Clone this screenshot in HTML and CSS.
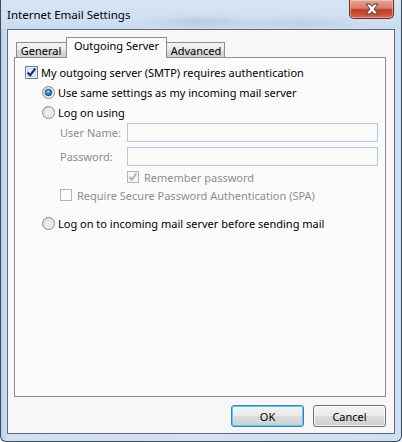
FILE: index.html
```html
<!DOCTYPE html>
<html>
<head>
<meta charset="utf-8">
<link rel="stylesheet" href="styles.css">
</head>
<body>
<div class="window">
  <div class="titlebar">
    <span class="title">Internet Email Settings</span>
    <div class="close-btn">
      <svg width="20" height="12" viewBox="0 0 20 12">
        <path d="M4 1 L8 1 L10 3.5 L12 1 L16 1 L12 6 L16 11 L12 11 L10 8.5 L8 11 L4 11 L8 6 Z" fill="#fff" stroke="#3b3b3b" stroke-width="1" stroke-linejoin="round"/>
      </svg>
    </div>
  </div>
  <div class="client">
    <div class="tabs">
      <div class="tab t-general">General</div>
      <div class="tab active">Outgoing Server</div>
      <div class="tab t-adv">Advanced</div>
    </div>
    <div class="pane">
      <div class="row r-auth">
        <span class="cb checked">
          <svg width="13" height="13" viewBox="0 0 13 13"><rect x="0.5" y="0.5" width="12" height="12" fill="#f4f4f4" stroke="#5d80a8"/><rect x="2.5" y="2.5" width="8" height="8" fill="#e6eef7" stroke="#c7d5e6"/><path d="M2.6 6.4 L5.2 9.2 L10.4 2.4" fill="none" stroke="#1d3372" stroke-width="2.2"/></svg>
        </span>
        <span class="lbl">My outgoing server (SMTP) requires authentication</span>
      </div>
      <div class="row r-radio">
        <span class="rb"><svg width="13" height="13" viewBox="0 0 13 13"><defs><radialGradient id="dot" cx="0.45" cy="0.4" r="0.6"><stop offset="0" stop-color="#8fdcff"/><stop offset="0.6" stop-color="#1f7fbf"/><stop offset="1" stop-color="#10507f"/></radialGradient><linearGradient id="rg" x1="0" y1="0" x2="1" y2="1"><stop offset="0" stop-color="#d5d5d5"/><stop offset="1" stop-color="#fbfbfb"/></linearGradient></defs><circle cx="6.5" cy="6.5" r="6" fill="url(#rg)" stroke="#8a8a8a"/><circle cx="6.5" cy="6.5" r="3.4" fill="url(#dot)" stroke="#1b4f7a" stroke-width="0.6"/></svg></span>
        <span class="lbl">Use same settings as my incoming mail server</span>
      </div>
      <div class="row r-radio">
        <span class="rb"><svg width="13" height="13" viewBox="0 0 13 13"><circle cx="6.5" cy="6.5" r="6" fill="url(#rg)" stroke="#8a8a8a"/><circle cx="6.5" cy="6.5" r="4" fill="#ececec" stroke="#dcdcdc" stroke-width="0.6"/></svg></span>
        <span class="lbl">Log on using</span>
      </div>
      <div class="field-row f-user">
        <span class="flabel">User Name:</span>
        <span class="input"></span>
      </div>
      <div class="field-row f-pass">
        <span class="flabel">Password:</span>
        <span class="input"></span>
      </div>
      <div class="row r-remember">
        <span class="cb">
          <svg width="12" height="12" viewBox="0 0 12 12"><rect x="0.5" y="0.5" width="11" height="11" fill="#f6f6f6" stroke="#b4b4b4"/><path d="M2.5 6 L4.8 8.6 L9.5 2.4" fill="none" stroke="#b3b3b3" stroke-width="2"/></svg>
        </span>
        <span class="lbl dis">Remember password</span>
      </div>
      <div class="row r-spa">
        <span class="cb">
          <svg width="12" height="12" viewBox="0 0 12 12"><rect x="0.5" y="0.5" width="11" height="11" fill="#fbfbfb" stroke="#b4b4b4"/></svg>
        </span>
        <span class="lbl dis">Require Secure Password Authentication (SPA)</span>
      </div>
      <div class="row r-radio r-last">
        <span class="rb"><svg width="13" height="13" viewBox="0 0 13 13"><circle cx="6.5" cy="6.5" r="6" fill="url(#rg)" stroke="#8a8a8a"/><circle cx="6.5" cy="6.5" r="4" fill="#ececec" stroke="#dcdcdc" stroke-width="0.6"/></svg></span>
        <span class="lbl">Log on to incoming mail server before sending mail</span>
      </div>
    </div>
    <div class="buttons">
      <div class="btn default">OK</div>
      <div class="btn">Cancel</div>
    </div>
  </div>
</div>
</body>
</html>
```
FILE: styles.css
```css
html, body {
  margin: 0;
  padding: 0;
  background: #ffffff;
}
body {
  font-family: "Segoe UI", "Noto Sans", "Liberation Sans", sans-serif;
  font-size: 11px;
  color: #000;
}
.window {
  width: 402px;
  height: 442px;
  box-sizing: border-box;
  border: 1px solid #3d4a5a;
  border-top: none;
  border-radius: 0 0 6px 6px;
  background: linear-gradient(90deg, #b7cde4 0px, #cfe0f1 6px, #d3e3f3 50%, #cde0f2 100%);
  display: flex;
  flex-direction: column;
}
.titlebar {
  height: 29px;
  display: flex;
  justify-content: space-between;
  align-items: flex-start;
  padding: 0 7px 0 6px;
  background:
    radial-gradient(ellipse 60px 8px at 200px 22px, rgba(170,190,215,0.6), rgba(170,190,215,0)),
    radial-gradient(ellipse 70px 8px at 300px 23px, rgba(175,195,218,0.5), rgba(175,195,218,0)),
    linear-gradient(180deg, #d6e5f4, #cadcef);
}
.title {
  margin-top: 7px;
  color: #000;
  font-size: 11.5px;
}
.close-btn {
  width: 45px;
  height: 19px;
  box-sizing: border-box;
  border: 1px solid #6b2a22;
  border-top: none;
  border-radius: 0 0 5px 5px;
  background: linear-gradient(180deg, #e8a595 0%, #d77c6b 45%, #c33b26 55%, #d4644c 100%);
  display: flex;
  align-items: center;
  justify-content: center;
  box-shadow: inset 0 0 0 1px rgba(255,220,210,0.5);
}
.client {
  margin: 0 6px 7px 6px;
  flex: 1;
  border: 1px solid #5c6a7c;
  background: #f7f7f7;
  padding: 7px 8px 6px 6px;
  display: flex;
  flex-direction: column;
}
.tabs {
  display: flex;
  align-items: flex-end;
  padding-left: 2px;
  height: 20px;
  position: relative;
  z-index: 1;
}
.tab {
  height: 15px;
  box-sizing: border-box;
  border: 1px solid #8c8e94;
  border-bottom: none;
  background: linear-gradient(180deg, #f3f3f3 0%, #ebebeb 50%, #dcdcdc 51%, #cfcfcf 100%);
  line-height: 15px;
  text-align: center;
}
.t-general {
  width: 51px;
  padding-right: 1px;
}
.t-adv {
  width: 59px;
  margin-left: -1px;
  padding-left: 1px;
}
.tab.active {
  width: 101px;
  height: 21px;
  margin: 0 0 -1px -1px;
  background: #fbfbfb;
  line-height: 16px;
  position: relative;
  z-index: 2;
}
.pane {
  height: 340px;
  box-sizing: border-box;
  border: 1px solid #8c8e94;
  background: #fbfbfb;
  padding: 4px 0 0 10px;
  display: flex;
  flex-direction: column;
}
.row {
  display: flex;
  align-items: center;
  height: 20px;
}
.cb, .rb {
  display: flex;
  width: 13px;
  height: 13px;
}
.lbl {
  margin-left: 3px;
  white-space: nowrap;
}
.r-radio {
  padding-left: 17px;
}
.r-radio .lbl {
  margin-left: 3px;
}
.lbl.dis, .flabel {
  color: #8d8d8d;
}
.field-row {
  display: flex;
  align-items: center;
  padding-left: 35px;
  height: 19px;
}
.f-user {
  margin-top: 1px;
}
.f-pass {
  margin-top: 5px;
}
.flabel {
  width: 67px;
}
.input {
  width: 251px;
  height: 19px;
  box-sizing: border-box;
  border: 1px solid #b2c9e2;
  background: #fbfbfb;
}
.r-remember {
  padding-left: 102px;
  height: 18px;
  margin-top: 2px;
}
.r-remember .cb, .r-spa .cb {
  width: 12px;
  height: 12px;
}
.r-remember .lbl, .r-spa .lbl {
  margin-left: 5px;
}
.r-spa {
  padding-left: 35px;
  height: 18px;
}
.r-last {
  margin-top: 9px;
}
.buttons {
  display: flex;
  justify-content: flex-end;
  gap: 9px;
  margin-top: 8px;
}
.btn {
  width: 73px;
  height: 22px;
  box-sizing: border-box;
  border: 1px solid #707070;
  border-radius: 3px;
  background: linear-gradient(180deg, #f2f2f2 0%, #ebebeb 50%, #dddddd 51%, #cfcfcf 100%);
  display: flex;
  align-items: center;
  justify-content: center;
  box-shadow: inset 0 0 0 1px rgba(255,255,255,0.7);
}
.btn.default {
  border-color: #3c7fb1;
  box-shadow: inset 0 0 0 1px #48d3fb;
}
```
